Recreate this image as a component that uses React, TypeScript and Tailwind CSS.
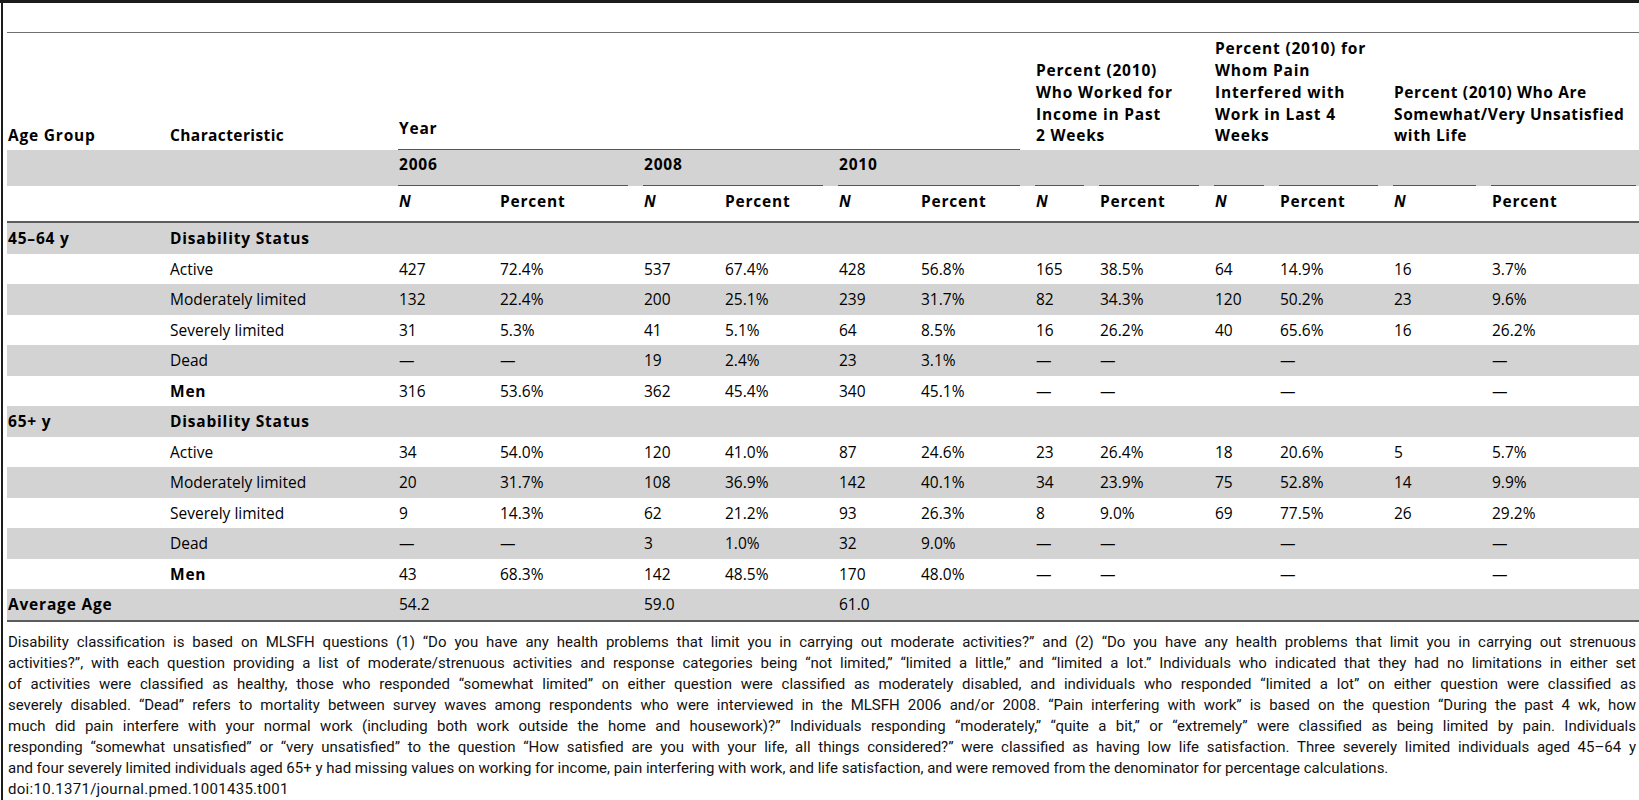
import React from "react";

const COLS =
  "grid grid-cols-[162px_229px_101px_144px_81px_114px_82px_115px_64px_115px_65px_114px_98px_160px]";

type Row = {
  age?: string;
  label: string;
  labelBold?: boolean;
  vals?: string[];
  shade: boolean;
};

const rows: Row[] = [
  { age: "45–64 y", label: "Disability Status", labelBold: true, shade: true },
  { label: "Active", vals: ["427", "72.4%", "537", "67.4%", "428", "56.8%", "165", "38.5%", "64", "14.9%", "16", "3.7%"], shade: false },
  { label: "Moderately limited", vals: ["132", "22.4%", "200", "25.1%", "239", "31.7%", "82", "34.3%", "120", "50.2%", "23", "9.6%"], shade: true },
  { label: "Severely limited", vals: ["31", "5.3%", "41", "5.1%", "64", "8.5%", "16", "26.2%", "40", "65.6%", "16", "26.2%"], shade: false },
  { label: "Dead", vals: ["—", "—", "19", "2.4%", "23", "3.1%", "—", "—", "", "—", "", "—"], shade: true },
  { label: "Men", labelBold: true, vals: ["316", "53.6%", "362", "45.4%", "340", "45.1%", "—", "—", "", "—", "", "—"], shade: false },
  { age: "65+ y", label: "Disability Status", labelBold: true, shade: true },
  { label: "Active", vals: ["34", "54.0%", "120", "41.0%", "87", "24.6%", "23", "26.4%", "18", "20.6%", "5", "5.7%"], shade: false },
  { label: "Moderately limited", vals: ["20", "31.7%", "108", "36.9%", "142", "40.1%", "34", "23.9%", "75", "52.8%", "14", "9.9%"], shade: true },
  { label: "Severely limited", vals: ["9", "14.3%", "62", "21.2%", "93", "26.3%", "8", "9.0%", "69", "77.5%", "26", "29.2%"], shade: false },
  { label: "Dead", vals: ["—", "—", "3", "1.0%", "32", "9.0%", "—", "—", "", "—", "", "—"], shade: true },
  { label: "Men", labelBold: true, vals: ["43", "68.3%", "142", "48.5%", "170", "48.0%", "—", "—", "", "—", "", "—"], shade: false },
];

const footLines = [
  "Disability classification is based on MLSFH questions (1) “Do you have any health problems that limit you in carrying out moderate activities?” and (2) “Do you have any health problems that limit you in carrying out strenuous",
  "activities?”, with each question providing a list of moderate/strenuous activities and response categories being “not limited,” “limited a little,” and “limited a lot.” Individuals who indicated that they had no limitations in either set",
  "of activities were classified as healthy, those who responded “somewhat limited” on either question were classified as moderately disabled, and individuals who responded “limited a lot” on either question were classified as",
  "severely disabled. “Dead” refers to mortality between survey waves among respondents who were interviewed in the MLSFH 2006 and/or 2008. “Pain interfering with work” is based on the question “During the past 4 wk, how",
  "much did pain interfere with your normal work (including both work outside the home and housework)?” Individuals responding “moderately,” “quite a bit,” or “extremely” were classified as being limited by pain. Individuals",
  "responding “somewhat unsatisfied” or “very unsatisfied” to the question “How satisfied are you with your life, all things considered?” were classified as having low life satisfaction. Three severely limited individuals aged 45–64 y",
];

function Underlined({ children, className = "" }: { children?: React.ReactNode; className?: string }) {
  return (
    <div className={"pr-[15px] " + className}>
      <div className="h-full border-b border-[#555] pl-px pt-[4px] leading-[21px]">{children}</div>
    </div>
  );
}

const B = "font-bold tracking-[0.8px]";

export default function App() {
  return (
    <div className="w-[1639px] h-[800px] overflow-hidden bg-white border-t-[3px] border-[#1c1c1c] text-black font-['Open_Sans',sans-serif] text-[15.5px]">
      <div className="ml-px h-full border-l-2 border-[#1c1c1c] pl-[4px]">
        <div className="w-[1651px]">
          <div className="h-[29px]" />
          <div className="h-px bg-[#6f6f6f]" />
          {/* header row 1 */}
          <div className={COLS + " h-[117px] leading-[21.75px] " + B}>
            <div className="flex items-end pl-px pb-[3px]">Age Group</div>
            <div className="flex items-end pl-px pb-[3px] tracking-[0.4px]">Characteristic</div>
            <div className="col-span-6 pr-[15px]">
              <div className="flex h-full items-end border-b border-[#555] pl-px pb-[9px]">Year</div>
            </div>
            <div className="col-span-2 flex items-end pl-px pr-[15px] pb-[3px]">
              <div className="whitespace-nowrap">
                Percent (2010)
                <br />
                Who Worked for
                <br />
                Income in Past
                <br />2 Weeks
              </div>
            </div>
            <div className="col-span-2 flex items-end pl-px pr-[15px] pb-[3px]">
              <div className="whitespace-nowrap">
                Percent (2010) for
                <br />
                Whom Pain
                <br />
                Interfered with
                <br />
                Work in Last 4
                <br />
                Weeks
              </div>
            </div>
            <div className="col-span-2 flex items-end pl-px pb-[3px]">
              <div className="whitespace-nowrap tracking-[0.6px]">
                Percent (2010) Who Are
                <br />
                Somewhat/Very Unsatisfied
                <br />
                with Life
              </div>
            </div>
          </div>
          {/* header row 2 */}
          <div className={COLS + " h-[36px] bg-[#d3d3d3] " + B}>
            <div />
            <div />
            <Underlined className="col-span-2">2006</Underlined>
            <Underlined className="col-span-2">2008</Underlined>
            <Underlined className="col-span-2">2010</Underlined>
            <Underlined />
            <Underlined />
            <Underlined />
            <Underlined />
            <Underlined />
            <Underlined />
          </div>
          {/* header row 3 */}
          <div className={COLS + " h-[35px] leading-[21px] " + B}>
            <div />
            <div />
            {["2006", "2008", "2010", "w", "p", "s"].map((k) => (
              <React.Fragment key={k}>
                <div className="pl-px pt-[5px] italic">N</div>
                <div className="pl-px pt-[5px]">Percent</div>
              </React.Fragment>
            ))}
          </div>
          <div className="h-[2px] bg-[#5c5c5c]" />
          {/* data */}
          {rows.map((r, i) => (
            <div
              key={i}
              className={COLS + " h-[30.5px] leading-[30.5px] " + (r.shade ? "bg-[#d3d3d3]" : "bg-white")}
            >
              <div className={"pl-px " + B}>{r.age ?? ""}</div>
              <div className={"pl-px " + (r.labelBold ? B : "")}>{r.label}</div>
              {(r.vals ?? Array(12).fill("")).map((v, j) => (
                <div key={j} className="pl-px">
                  {v}
                </div>
              ))}
            </div>
          ))}
          <div className={COLS + " h-[30.5px] leading-[30.5px] bg-[#d3d3d3]"}>
            <div className={"col-span-2 pl-px " + B}>Average Age</div>
            <div className="pl-px">54.2</div>
            <div />
            <div className="pl-px">59.0</div>
            <div />
            <div className="pl-px">61.0</div>
            <div />
            <div />
            <div />
            <div />
            <div />
            <div />
            <div />
          </div>
          <div className="h-[2px] bg-[#5c5c5c]" />
        </div>
        {/* footnote */}
        <div className="mt-[10px] w-[1629px] pl-px font-['Roboto',sans-serif] text-[15px] leading-[21px] text-[#111]">
          {footLines.map((l, i) => (
            <div key={i} className="text-justify [text-align-last:justify] whitespace-nowrap">
              {l}
            </div>
          ))}
          <div className="whitespace-nowrap">
            and four severely limited individuals aged 65+ y had missing values on working for income, pain interfering with work, and life satisfaction, and were removed from the denominator for percentage calculations.
          </div>
          <div className="whitespace-nowrap tracking-[0.3px]">doi:10.1371/journal.pmed.1001435.t001</div>
        </div>
      </div>
    </div>
  );
}
